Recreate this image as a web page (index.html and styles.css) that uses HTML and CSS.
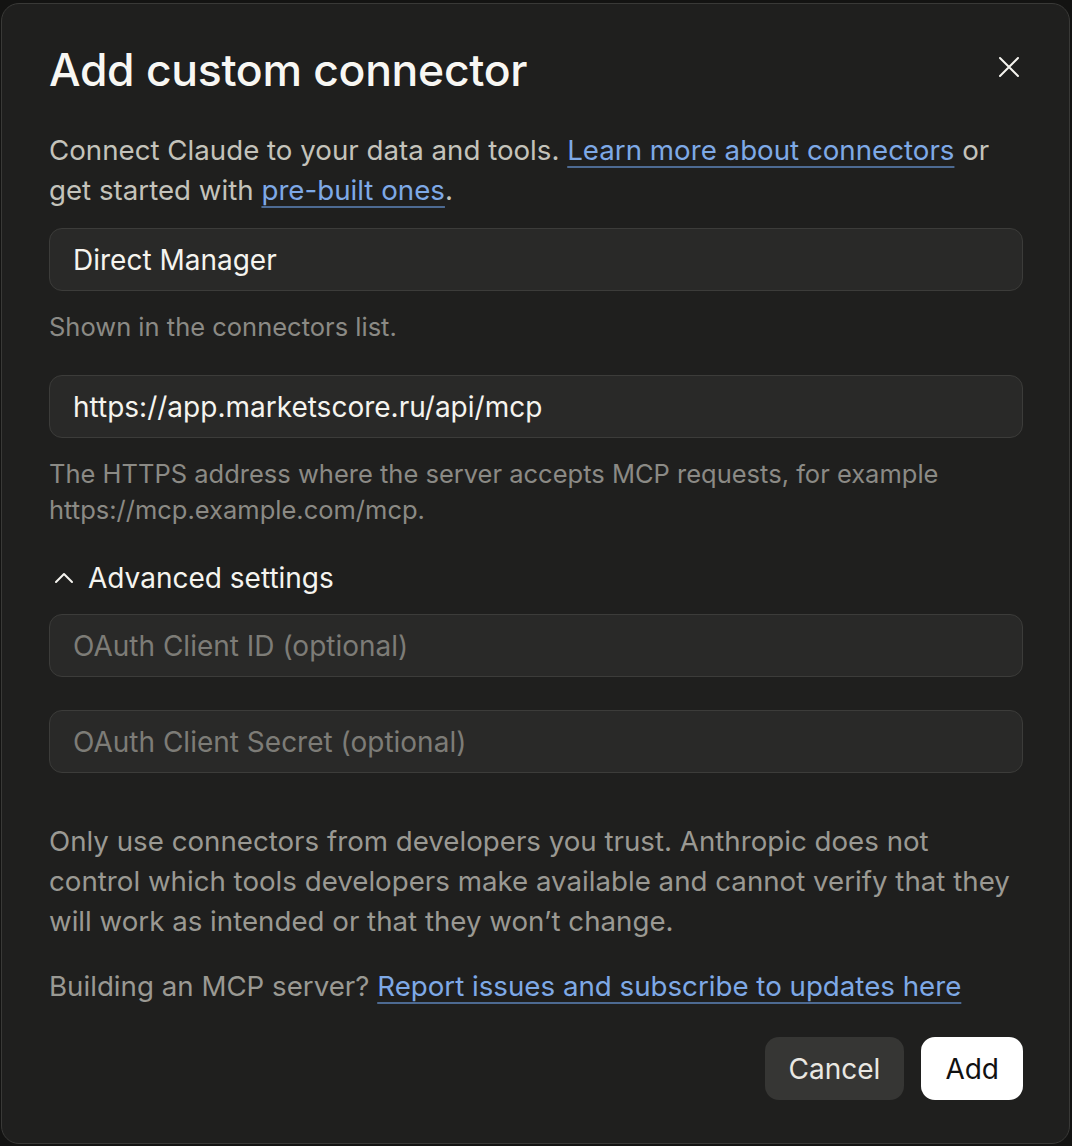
FILE: index.html
```html
<!DOCTYPE html>
<html>

<head>
    <title>Add custom connector</title>
    <link rel="stylesheet" href="styles.css">
</head>

<body>
    <div class="dialog">
        <div class="header">
            <h1>Add custom connector</h1>
            <button class="close" aria-label="Close">
                <svg width="24" height="24" viewBox="0 0 24 24">
                    <path d="M3 3 L21 21 M21 3 L3 21" stroke="#f5f4ef" stroke-width="2" stroke-linecap="round"/>
                </svg>
            </button>
        </div>

        <p class="intro">Connect Claude to your data and tools. <a href="#">Learn more about connectors</a> or get started with <a href="#">pre-built ones</a>.</p>

        <div class="field">
            <input type="text" class="input" value="Direct Manager">
            <div class="hint">Shown in the connectors list.</div>
        </div>

        <div class="field">
            <input type="text" class="input" value="https://app.marketscore.ru/api/mcp">
            <div class="hint">The HTTPS address where the server accepts MCP requests, for example https://mcp.example.com/mcp.</div>
        </div>

        <div class="advanced">
            <svg width="24" height="24" viewBox="0 0 24 24">
                <path d="M4 16 L12 8 L20 16" fill="none" stroke="#f5f4ef" stroke-width="2" stroke-linecap="round" stroke-linejoin="round"/>
            </svg>
            <span>Advanced settings</span>
        </div>

        <div class="oauth">
            <input type="text" class="input" placeholder="OAuth Client ID (optional)">
            <input type="text" class="input" placeholder="OAuth Client Secret (optional)">
        </div>

        <p class="warning">Only use connectors from developers you trust. Anthropic does not control which tools developers make available and cannot verify that they will work as intended or that they won’t change.</p>

        <p class="warning">Building an MCP server? <a href="#">Report issues and subscribe to updates here</a></p>

        <div class="actions">
            <button class="btn cancel">Cancel</button>
            <button class="btn add">Add</button>
        </div>
    </div>
</body>
</html>
```

FILE: styles.css
```css
html, body {
    margin: 0;
    height: 100%;
    background-color: #131312;
}

body {
    font-family: Inter, "Noto Sans", sans-serif;
    color: #f5f4ef;
    box-sizing: border-box;
    padding: 3px 2px 2px 1px;
}

.dialog {
    box-sizing: border-box;
    height: 100%;
    background-color: #1f1f1e;
    border: 1px solid #393937;
    border-radius: 18px;
    padding: 0 46px 0 47px;
}

.header {
    display: flex;
    align-items: center;
    justify-content: space-between;
    padding-top: 38px;
}

h1 {
    margin: 0;
    font-size: 44.5px;
    font-weight: 500;
    letter-spacing: -0.3px;
    line-height: 56px;
    color: #f8f7f3;
}

.close {
    background: none;
    border: 0;
    padding: 0;
    margin: 0 2px 6px 0;
    display: flex;
    cursor: pointer;
}

.intro {
    margin: 32px 10px 18px 0;
    font-size: 27.7px;
    line-height: 40px;
    color: #c4c3bb;
}

a {
    color: #7ea9e6;
    text-decoration: underline;
    text-decoration-color: #4d6a92;
    text-decoration-thickness: 2px;
    text-underline-offset: 6px;
}

.field {
    margin-bottom: 30px;
}

.input {
    display: block;
    box-sizing: border-box;
    width: 100%;
    height: 63px;
    padding: 0 23px;
    background-color: #292928;
    border: 1.5px solid #3c3c3a;
    border-radius: 13px;
    font-family: inherit;
    font-size: 28px;
    color: #f5f4ef;
    outline: none;
}

.input::placeholder {
    color: #7d7c77;
}

.hint {
    margin: 18px 10px 0 0;
    font-size: 25.5px;
    line-height: 36px;
    color: #8b8a85;
}

.advanced {
    display: flex;
    align-items: center;
    gap: 12px;
    margin: 14px 0 16px 3px;
    font-size: 28px;
    line-height: 40px;
    color: #f5f4ef;
}

.oauth {
    display: flex;
    flex-direction: column;
    gap: 33px;
    margin-bottom: 48px;
}

.warning {
    margin: 0 10px 25px 0;
    font-size: 27.7px;
    line-height: 40px;
    color: #9a9993;
}

.actions {
    display: flex;
    justify-content: flex-end;
    gap: 17px;
    margin-top: 31px;
}

.btn {
    height: 63px;
    border: 0;
    border-radius: 14px;
    font-family: inherit;
    font-size: 28px;
    cursor: pointer;
}

.cancel {
    padding: 0 24px;
    background-color: #363634;
    color: #e9e8e2;
}

.add {
    padding: 0 24px;
    background-color: #ffffff;
    color: #111111;
}
```
